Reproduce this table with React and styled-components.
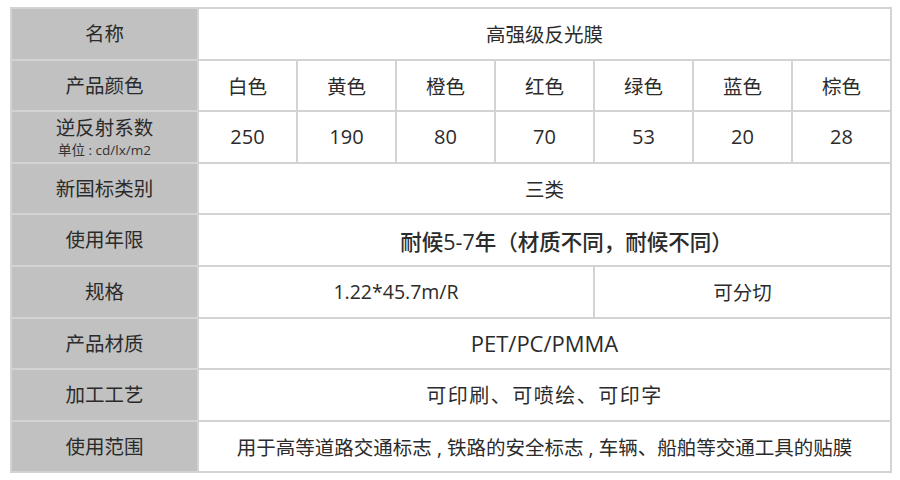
import React from "react";
import styled, { createGlobalStyle } from "styled-components";

const Global = createGlobalStyle`
  html, body { margin: 0; padding: 0; background: #ffffff; }
  body { font-family: "Open Sans", "Noto Sans CJK SC", sans-serif; color: #333; }
`;

const Page = styled.div`
  width: 900px;
  height: 480px;
  box-sizing: border-box;
  padding: 7px 10px 0 10px;
  background: #fff;
`;

const Table = styled.table`
  width: 880px;
  table-layout: fixed;
  border-collapse: collapse;
  border: 2px solid #d6d6d6;
`;

const Row = styled.tr`
  height: 51.6px;
`;

const LabelCell = styled.th`
  background: #c1c1c1;
  border: 2px solid #d3d3d3;
  font-family: "Open Sans", "Noto Sans CJK SC", sans-serif;
  font-weight: 400;
  font-size: 19.5px;
  color: #2b2b2b;
  text-align: center;
  vertical-align: middle;
  padding: 0;
  line-height: 1.2;
`;

const Unit = styled.div`
  font-size: 13.5px;
  line-height: 1.1;
  color: #333;
  margin-top: 3px;
`;

const DataCell = styled.td`
  border: 2px solid #d3d3d3;
  background: #fff;
  font-family: "Open Sans", "Noto Sans CJK SC", sans-serif;
  font-size: ${(p) => p.$size || 19.5}px;
  font-weight: ${(p) => p.$weight || 400};
  color: #2b2b2b;
  text-align: center;
  vertical-align: middle;
  padding: 0 0 0 ${(p) => p.$shift || 0}px;
  white-space: nowrap;
  letter-spacing: ${(p) => p.$ls || 0}px;
`;

const colors = ["白色", "黄色", "橙色", "红色", "绿色", "蓝色", "棕色"];
const values = ["250", "190", "80", "70", "53", "20", "28"];

export default function App() {
  return (
    <Page>
      <Global />
      <Table>
        <colgroup>
          <col style={{ width: 187 }} />
          {colors.map((c) => (
            <col key={c} style={{ width: 99 }} />
          ))}
        </colgroup>
        <tbody>
          <Row>
            <LabelCell>名称</LabelCell>
            <DataCell colSpan={7}>高强级反光膜</DataCell>
          </Row>
          <Row>
            <LabelCell>产品颜色</LabelCell>
            {colors.map((c) => (
              <DataCell key={c}>{c}</DataCell>
            ))}
          </Row>
          <Row>
            <LabelCell>
              逆反射系数
              <Unit>单位 : cd/lx/m2</Unit>
            </LabelCell>
            {values.map((v, i) => (
              <DataCell key={i} $size={20}>{v}</DataCell>
            ))}
          </Row>
          <Row>
            <LabelCell>新国标类别</LabelCell>
            <DataCell colSpan={7}>三类</DataCell>
          </Row>
          <Row>
            <LabelCell>使用年限</LabelCell>
            <DataCell colSpan={7} $size={21.5} $weight={500} $shift={44}>
              耐候5-7年（材质不同，耐候不同）
            </DataCell>
          </Row>
          <Row>
            <LabelCell>规格</LabelCell>
            <DataCell colSpan={4} $size={19.5} $weight={500}>1.22*45.7m/R</DataCell>
            <DataCell colSpan={3}>可分切</DataCell>
          </Row>
          <Row>
            <LabelCell>产品材质</LabelCell>
            <DataCell colSpan={7} $size={22} $weight={500}>PET/PC/PMMA</DataCell>
          </Row>
          <Row>
            <LabelCell>加工工艺</LabelCell>
            <DataCell colSpan={7} $size={20} $ls={1.5}>可印刷、可喷绘、可印字</DataCell>
          </Row>
          <Row>
            <LabelCell>使用范围</LabelCell>
            <DataCell colSpan={7} $size={19.5}>
              用于高等道路交通标志 , 铁路的安全标志 , 车辆、船舶等交通工具的贴膜
            </DataCell>
          </Row>
        </tbody>
      </Table>
    </Page>
  );
}
